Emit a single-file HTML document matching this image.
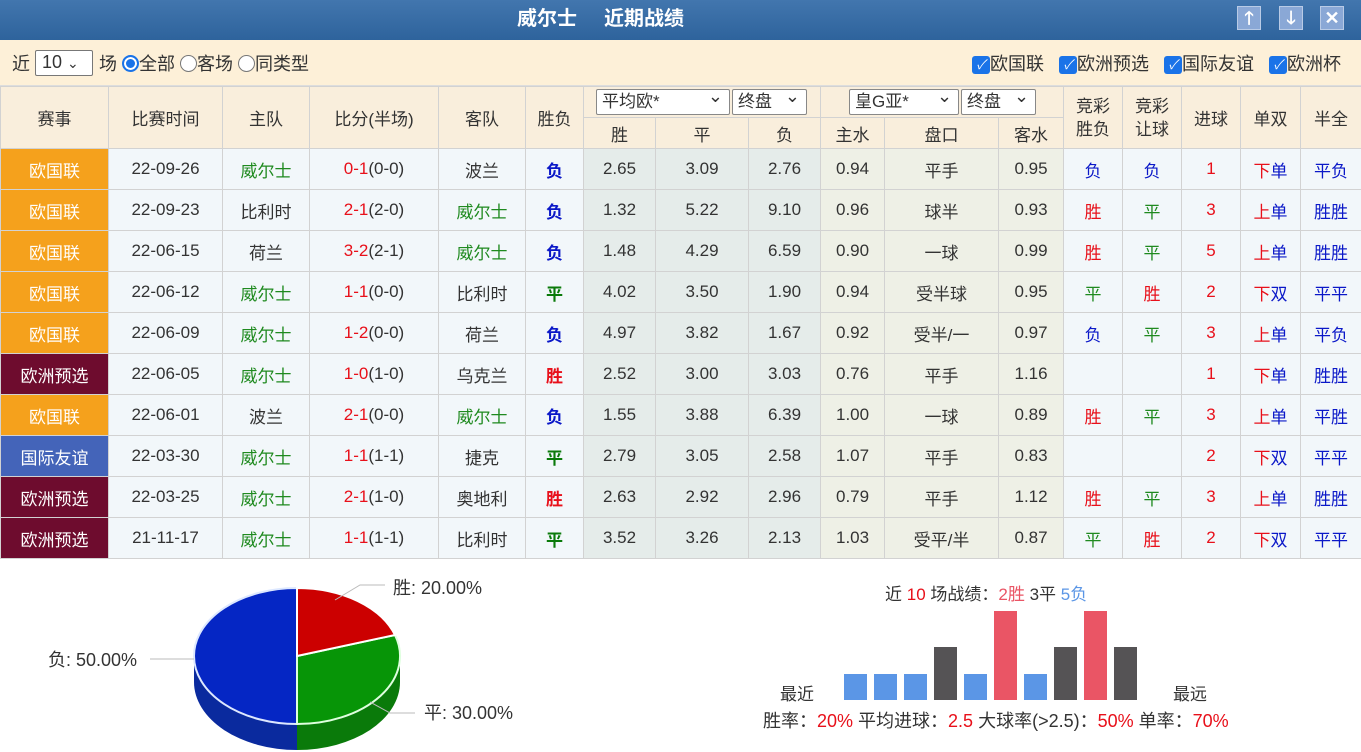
<!DOCTYPE html>
<html><head><meta charset="utf-8"><style>
*{box-sizing:border-box;margin:0;padding:0}
body{width:1361px;height:752px;overflow:hidden;background:#fff;font-family:"Liberation Sans","Noto Sans CJK SC",sans-serif;font-size:17px;color:#333;position:relative}
.title{position:absolute;left:0;top:0;width:1361px;height:40px;background:linear-gradient(#4276ae,#2e639c);color:#fff;font-weight:bold;font-size:20px;line-height:38px}
.title span{position:absolute;top:0}
.btn{position:absolute;top:6px;width:24px;height:24px;background:#8aa8d6;border:1px solid #b9cbe6;color:#fff;font-size:18px;line-height:22px;text-align:center;font-weight:bold}
.bar{position:absolute;left:0;top:40px;width:1361px;height:46px;background:#fdf0d8;border-bottom:1px solid #ddd}
.bar span{position:absolute;top:10px;font-size:18px}
.sel{position:absolute;border:1px solid #777;background:#fff;border-radius:2px;font-size:18px;padding-left:6px;line-height:22px;height:26px}
.rad{display:inline-block;width:17px;height:17px;border:1px solid #777;border-radius:50%;vertical-align:-2px;background:#fff}
.rad.on{border:2px solid #1a73e8;box-shadow:inset 0 0 0 2px #fff;background:#1a73e8}
.chk{display:inline-block;width:18px;height:18px;background:#1a73e8;border-radius:3px;color:#fff;font-size:13px;line-height:18px;text-align:center;vertical-align:1px}
table{position:absolute;left:0;top:86px;border-collapse:collapse;table-layout:fixed;width:1361px}
td{border:1px solid #d2d2d2;text-align:center;height:41px;font-size:17px;white-space:nowrap;overflow:hidden}
thead td{background:#f9eedc;height:31px;color:#333}
tbody td{background:#f2f7fa}
tbody td.o{background:#e5ecea}
tbody td.a{background:#eef0e6}
.g{color:#1f8a1f}.r{color:#e8101a}.b{color:#0b18c8}.bb{color:#0b18c8;font-weight:bold}.rb{color:#e8101a;font-weight:bold}.gb{color:#0a7a0a;font-weight:bold}
td.oj{background:#f5a11c!important;color:#fff}
td.oz{background:#6e0c2e!important;color:#fff}
td.gj{background:#4464b9!important;color:#fff}
.hs{display:inline-block;border:1px solid #888;background:#fff;height:26px;line-height:24px;font-size:17px;text-align:left;padding-left:5px;border-radius:2px;position:relative}
.hs:after{content:"⌄";position:absolute;right:6px;top:-6px;font-size:18px}
</style></head><body>
<div class="title"><span style="left:517px">威尔士</span><span style="left:604px">近期战绩</span></div>
<div class="btn" style="left:1237px">🡑</div>
<div class="btn" style="left:1279px">🡓</div>
<div class="btn" style="left:1320px">✕</div>
<div class="bar">
<span style="left:12px">近</span>
<div class="sel" style="left:35px;top:10px;width:58px">10 <span style="position:static;font-size:14px">⌄</span></div>
<span style="left:99px">场 <i class="rad on"></i>全部 <i class="rad"></i>客场 <i class="rad"></i>同类型</span>
<span style="left:972px;word-spacing:10px"><i class="chk">✓</i>欧国联 <i class="chk">✓</i>欧洲预选 <i class="chk">✓</i>国际友谊 <i class="chk">✓</i>欧洲杯</span>
</div>
<table>
<colgroup><col style="width:108px"><col style="width:114px"><col style="width:87px"><col style="width:129px"><col style="width:87px"><col style="width:58px"><col style="width:72px"><col style="width:93px"><col style="width:72px"><col style="width:64px"><col style="width:114px"><col style="width:65px"><col style="width:59px"><col style="width:59px"><col style="width:59px"><col style="width:60px"><col style="width:61px"></colgroup>
<thead>
<tr><td rowspan="2">赛事</td><td rowspan="2">比赛时间</td><td rowspan="2">主队</td><td rowspan="2">比分(半场)</td><td rowspan="2">客队</td><td rowspan="2">胜负</td>
<td colspan="3" style="text-align:left;padding-left:12px"><span class="hs" style="width:134px">平均欧*</span><span class="hs" style="width:75px;margin-left:2px">终盘</span></td>
<td colspan="3" style="text-align:left;padding-left:28px"><span class="hs" style="width:110px">皇G亚*</span><span class="hs" style="width:75px;margin-left:2px">终盘</span></td>
<td rowspan="2" style="line-height:23px">竞彩<br>胜负</td><td rowspan="2" style="line-height:23px">竞彩<br>让球</td><td rowspan="2">进球</td><td rowspan="2">单双</td><td rowspan="2">半全</td></tr>
<tr><td>胜</td><td>平</td><td>负</td><td>主水</td><td>盘口</td><td>客水</td></tr>
</thead>
<tbody>
<tr><td class="oj">欧国联</td><td>22-09-26</td><td class="g">威尔士</td><td><span class="r">0-1</span>(0-0)</td><td>波兰</td><td class="bb">负</td><td class="o">2.65</td><td class="o">3.09</td><td class="o">2.76</td><td class="a">0.94</td><td class="a">平手</td><td class="a">0.95</td><td class="b">负</td><td class="b">负</td><td class="r">1</td><td><span class="r">下</span><span class="b">单</span></td><td class="b">平负</td></tr>
<tr><td class="oj">欧国联</td><td>22-09-23</td><td>比利时</td><td><span class="r">2-1</span>(2-0)</td><td class="g">威尔士</td><td class="bb">负</td><td class="o">1.32</td><td class="o">5.22</td><td class="o">9.10</td><td class="a">0.96</td><td class="a">球半</td><td class="a">0.93</td><td class="r">胜</td><td class="g">平</td><td class="r">3</td><td><span class="r">上</span><span class="b">单</span></td><td class="b">胜胜</td></tr>
<tr><td class="oj">欧国联</td><td>22-06-15</td><td>荷兰</td><td><span class="r">3-2</span>(2-1)</td><td class="g">威尔士</td><td class="bb">负</td><td class="o">1.48</td><td class="o">4.29</td><td class="o">6.59</td><td class="a">0.90</td><td class="a">一球</td><td class="a">0.99</td><td class="r">胜</td><td class="g">平</td><td class="r">5</td><td><span class="r">上</span><span class="b">单</span></td><td class="b">胜胜</td></tr>
<tr><td class="oj">欧国联</td><td>22-06-12</td><td class="g">威尔士</td><td><span class="r">1-1</span>(0-0)</td><td>比利时</td><td class="gb">平</td><td class="o">4.02</td><td class="o">3.50</td><td class="o">1.90</td><td class="a">0.94</td><td class="a">受半球</td><td class="a">0.95</td><td class="g">平</td><td class="r">胜</td><td class="r">2</td><td><span class="r">下</span><span class="b">双</span></td><td class="b">平平</td></tr>
<tr><td class="oj">欧国联</td><td>22-06-09</td><td class="g">威尔士</td><td><span class="r">1-2</span>(0-0)</td><td>荷兰</td><td class="bb">负</td><td class="o">4.97</td><td class="o">3.82</td><td class="o">1.67</td><td class="a">0.92</td><td class="a">受半/一</td><td class="a">0.97</td><td class="b">负</td><td class="g">平</td><td class="r">3</td><td><span class="r">上</span><span class="b">单</span></td><td class="b">平负</td></tr>
<tr><td class="oz">欧洲预选</td><td>22-06-05</td><td class="g">威尔士</td><td><span class="r">1-0</span>(1-0)</td><td>乌克兰</td><td class="rb">胜</td><td class="o">2.52</td><td class="o">3.00</td><td class="o">3.03</td><td class="a">0.76</td><td class="a">平手</td><td class="a">1.16</td><td></td><td></td><td class="r">1</td><td><span class="r">下</span><span class="b">单</span></td><td class="b">胜胜</td></tr>
<tr><td class="oj">欧国联</td><td>22-06-01</td><td>波兰</td><td><span class="r">2-1</span>(0-0)</td><td class="g">威尔士</td><td class="bb">负</td><td class="o">1.55</td><td class="o">3.88</td><td class="o">6.39</td><td class="a">1.00</td><td class="a">一球</td><td class="a">0.89</td><td class="r">胜</td><td class="g">平</td><td class="r">3</td><td><span class="r">上</span><span class="b">单</span></td><td class="b">平胜</td></tr>
<tr><td class="gj">国际友谊</td><td>22-03-30</td><td class="g">威尔士</td><td><span class="r">1-1</span>(1-1)</td><td>捷克</td><td class="gb">平</td><td class="o">2.79</td><td class="o">3.05</td><td class="o">2.58</td><td class="a">1.07</td><td class="a">平手</td><td class="a">0.83</td><td></td><td></td><td class="r">2</td><td><span class="r">下</span><span class="b">双</span></td><td class="b">平平</td></tr>
<tr><td class="oz">欧洲预选</td><td>22-03-25</td><td class="g">威尔士</td><td><span class="r">2-1</span>(1-0)</td><td>奥地利</td><td class="rb">胜</td><td class="o">2.63</td><td class="o">2.92</td><td class="o">2.96</td><td class="a">0.79</td><td class="a">平手</td><td class="a">1.12</td><td class="r">胜</td><td class="g">平</td><td class="r">3</td><td><span class="r">上</span><span class="b">单</span></td><td class="b">胜胜</td></tr>
<tr><td class="oz">欧洲预选</td><td>21-11-17</td><td class="g">威尔士</td><td><span class="r">1-1</span>(1-1)</td><td>比利时</td><td class="gb">平</td><td class="o">3.52</td><td class="o">3.26</td><td class="o">2.13</td><td class="a">1.03</td><td class="a">受平/半</td><td class="a">0.87</td><td class="g">平</td><td class="r">胜</td><td class="r">2</td><td><span class="r">下</span><span class="b">双</span></td><td class="b">平平</td></tr>
</tbody></table>

<svg style="position:absolute;left:0;top:560px" width="760" height="192" font-family="Liberation Sans,Noto Sans CJK SC,sans-serif" font-size="18">
<g transform="translate(0,-560)">
<rect x="194" y="656" width="103" height="26" fill="#0a2a9e"/>
<path d="M194,682 A103,68 0 0,0 297,750 L297,682 Z" fill="#0a2a9e"/>
<rect x="297" y="656" width="103" height="26" fill="#0a7a0a"/>
<path d="M400,682 A103,68 0 0,1 297,750 L297,682 Z" fill="#0a7a0a"/>
<path d="M297,656 L297,724 A103,68 0 0,1 297,588 Z" fill="#0526c4" stroke="#dde8ff" stroke-width="2"/>
<path d="M297,656 L395,635 A103,68 0 0,1 297,724 Z" fill="#079507" stroke="#dfffdf" stroke-width="2"/>
<path d="M297,656 L297,588 A103,68 0 0,1 395,635 Z" fill="#cc0000" stroke="#fff" stroke-width="2"/>
<path d="M335,600 L360,585 L385,585" fill="none" stroke="#bbb"/>
<path d="M150,659 L194,659" fill="none" stroke="#bbb"/>
<path d="M370,702 L390,713 L415,713" fill="none" stroke="#bbb"/>
<text x="393" y="594" fill="#333">胜: 20.00%</text>
<text x="48" y="666" fill="#333">负: 50.00%</text>
<text x="424" y="719" fill="#333">平: 30.00%</text>
</g></svg>

<div style="position:absolute;left:885px;top:580px;font-size:17px">近 <span class="r">10</span> 场战绩：<span style="color:#ea5565">2胜</span> 3平 <span style="color:#5b96e6">5负</span></div>
<div style="position:absolute;left:780px;top:680px">最近</div>
<div style="position:absolute;left:1173px;top:680px">最远</div>
<svg style="position:absolute;left:840px;top:600px" width="310" height="102">
<g transform="translate(-840,-600)">
<rect x="844" y="674" width="23" height="26" fill="#5b96e6"/>
<rect x="874" y="674" width="23" height="26" fill="#5b96e6"/>
<rect x="904" y="674" width="23" height="26" fill="#5b96e6"/>
<rect x="934" y="647" width="23" height="53" fill="#555355"/>
<rect x="964" y="674" width="23" height="26" fill="#5b96e6"/>
<rect x="994" y="611" width="23" height="89" fill="#ea5565"/>
<rect x="1024" y="674" width="23" height="26" fill="#5b96e6"/>
<rect x="1054" y="647" width="23" height="53" fill="#555355"/>
<rect x="1084" y="611" width="23" height="89" fill="#ea5565"/>
<rect x="1114" y="647" width="23" height="53" fill="#555355"/>
</g></svg>
<div style="position:absolute;left:763px;top:707px;font-size:18px">胜率：<span class="r">20%</span> 平均进球：<span class="r">2.5</span> 大球率(&gt;2.5)：<span class="r">50%</span> 单率：<span class="r">70%</span></div>
</body></html>
